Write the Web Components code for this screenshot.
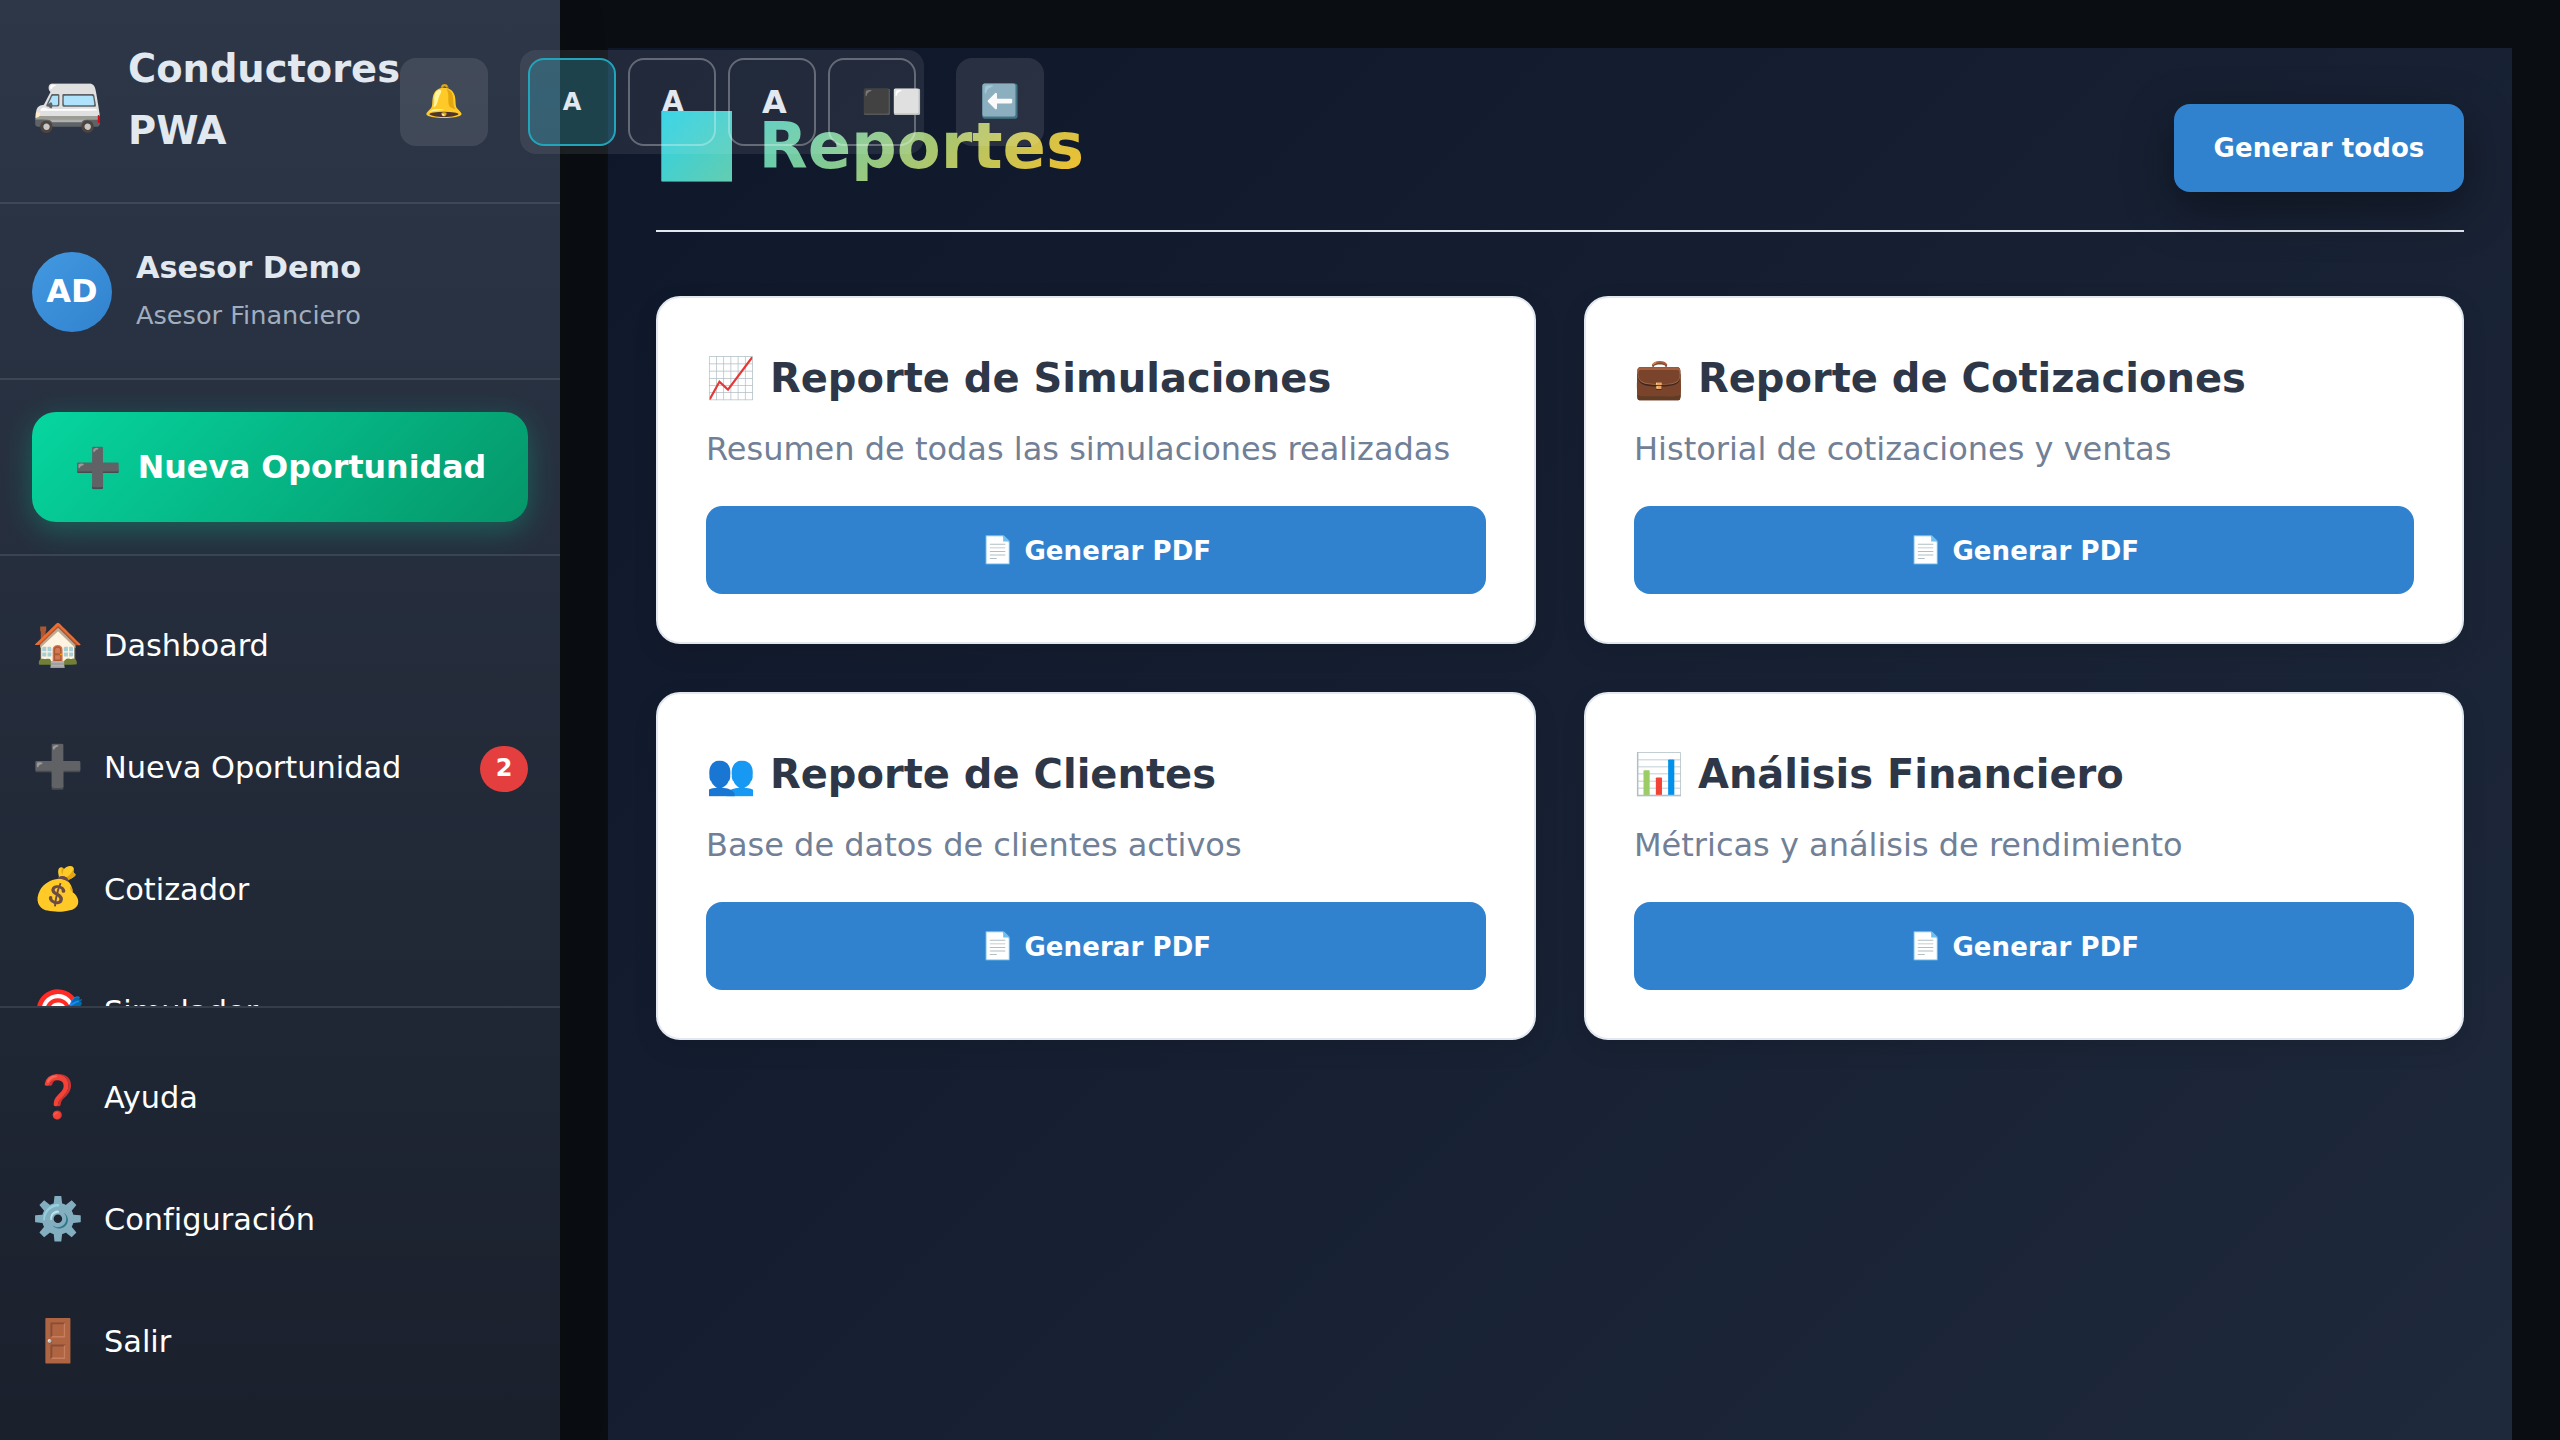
<!DOCTYPE html>
<html lang="es">
<head>
<meta charset="utf-8">
<title>Reportes</title>
<style>
html,body{margin:0;height:100%}
body{background:#0a0e12;font-family:"DejaVu Sans",sans-serif;font-size:32px;line-height:1.6;overflow:hidden}
</style>
</head>
<body>
<app-shell></app-shell>
<script>
const define = (name, css, html) => customElements.define(name, class extends HTMLElement {
  constructor() {
    super();
    const t = document.createElement('template');
    t.innerHTML = `<style>*{box-sizing:border-box}${css}</style>${html}`;
    this.attachShadow({ mode: 'open' }).append(t.content.cloneNode(true));
  }
});

define('icon-button', `
:host{display:flex;flex:none;width:88px;height:88px;box-sizing:border-box;padding-bottom:2px;border-radius:16px;align-items:center;justify-content:center;background:rgba(255,255,255,.1);font-size:32px;line-height:normal}
`, `<slot></slot>`);

define('size-button', `
:host{display:block;flex:none;width:88px;height:88px;box-sizing:border-box;border-radius:16px;border:2px solid rgba(255,255,255,.3);padding:0 32px;color:#e2e8f0;font-weight:700;line-height:84px;text-align:center;white-space:nowrap}
:host([active]){border-color:#22a5bb;background:rgba(34,211,238,.2)}
`, `<slot></slot>`);

define('text-tools', `
:host{display:flex;flex:none;gap:12px;padding:8px;border-radius:16px;background:rgba(255,255,255,.08)}
.a{font-size:24px}.b{font-size:28px}.c{font-size:32px}
`, `<size-button class="a" active>A</size-button><size-button class="b">A</size-button><size-button class="c">A</size-button><size-button class="a">⬛⬜</size-button>`);

define('brand-header', `
:host{display:flex;align-items:center;box-sizing:border-box;height:204px;padding:0 32px;border-bottom:2px solid rgba(255,255,255,.1)}
.van{font-size:57.6px;line-height:92px;margin-right:24px;padding-top:2px;flex:none}
.name{width:272px;flex:none;font-size:38.4px;font-weight:700;color:#e2e8f0;line-height:62px;padding-bottom:2px}
.tools{display:flex;gap:32px;flex:none;align-items:center;padding-top:2px}
`, `<span class="van">🚐</span><span class="name">Conductores PWA</span>
<div class="tools"><icon-button>🔔</icon-button><text-tools></text-tools><icon-button>⬅️</icon-button></div>`);

define('user-card', `
:host{display:flex;align-items:center;gap:24px;box-sizing:border-box;height:176px;padding:0 32px;border-bottom:2px solid rgba(255,255,255,.1)}
.avatar{width:80px;height:80px;border-radius:50%;background:linear-gradient(135deg,#4299e1,#3182ce);display:flex;align-items:center;justify-content:center;color:#fff;font-weight:700;font-size:32px;margin-top:1px}
.info{padding-bottom:2px}
.n{font-size:30.4px;font-weight:700;color:#e2e8f0;line-height:50px}
.r{font-size:25.6px;color:#a0aec0;line-height:44px}
`, `<div class="avatar">AD</div><div class="info"><div class="n"><slot name="name"></slot></div><div class="r"><slot name="role"></slot></div></div>`);

define('new-button', `
:host{display:block;padding:32px;border-bottom:2px solid rgba(255,255,255,.1)}
.btn{display:flex;align-items:center;justify-content:center;gap:16px;height:110px;border-radius:24px;background:linear-gradient(135deg,#06d6a0,#059669);box-shadow:0 8px 30px rgba(6,214,160,.3);color:#fff;font-weight:700;font-size:31.7px;line-height:normal;white-space:nowrap}
.i{font-size:38.4px}
`, `<div class="btn"><span class="i">➕</span><span><slot></slot></span></div>`);

define('nav-item', `
:host{display:flex;align-items:center;gap:24px;height:122px;padding:0 32px;flex:none;color:#fff;font-size:30.4px}
.i{width:48px;flex:none;font-size:41.6px;white-space:nowrap}
.t{flex:1;padding-top:2px}
::slotted([slot=badge]){background:#e53e3e;color:#fff;font-size:24px;line-height:38px;font-weight:700;padding:3px 15.6px 5px;border-radius:24px;margin-top:3px}
`, `<span class="i"><slot name="icon"></slot></span><span class="t"><slot></slot></span><slot name="badge"></slot>`);

define('side-bar', `
:host{display:flex;flex-direction:column;width:560px;height:1440px;flex:none;position:relative;z-index:2;background:linear-gradient(180deg,#2d3748,#1a202c);box-shadow:8px 0 40px rgba(0,0,0,.1)}
nav{flex:1;min-height:0;overflow:hidden;padding-top:28px;display:flex;flex-direction:column}
footer{height:434px;flex:none;box-sizing:border-box;border-top:2px solid rgba(255,255,255,.1);padding-top:28px}
`, `<brand-header></brand-header>
<user-card><span slot="name">Asesor Demo</span><span slot="role">Asesor Financiero</span></user-card>
<new-button>Nueva Oportunidad</new-button>
<nav>
<nav-item><span slot="icon">🏠</span>Dashboard</nav-item>
<nav-item><span slot="icon">➕</span>Nueva Oportunidad<span slot="badge">2</span></nav-item>
<nav-item><span slot="icon">💰</span>Cotizador</nav-item>
<nav-item><span slot="icon">🎯</span>Simulador</nav-item>
</nav>
<footer>
<nav-item><span slot="icon">❓</span>Ayuda</nav-item>
<nav-item><span slot="icon">⚙️</span>Configuración</nav-item>
<nav-item><span slot="icon">🚪</span>Salir</nav-item>
</footer>`);

define('primary-button', `
:host{display:flex;align-items:center;justify-content:center;box-sizing:border-box;height:88px;border-radius:16px;background:#3182ce;color:#fff;font-weight:700;font-size:26px;letter-spacing:.1px;line-height:normal;white-space:nowrap}
::slotted([slot=icon]){margin-right:10.5px;font-size:26.667px}
.pdf{padding-top:1px}
`, `<slot name="icon"></slot><span class="pdf"><slot></slot></span>`);

define('page-header', `
:host{display:flex;align-items:center;justify-content:space-between;padding-bottom:32px;border-bottom:2px solid #e2e8f0;margin-bottom:64px}
h1{margin:0;padding:0 0 2px .5px;font-size:64px;letter-spacing:-.1px;font-weight:700;line-height:100.4px;background:linear-gradient(135deg,#22d3ee,#fbbf24);-webkit-background-clip:text;background-clip:text;color:transparent}
primary-button{width:290px;margin-top:1.6px;padding-bottom:2px;box-shadow:0 16px 50px rgba(0,0,0,.4)}
`, `<h1><slot></slot></h1><primary-button>Generar todos</primary-button>`);

define('report-card', `
:host{display:block;box-sizing:border-box;padding:48px;border:2px solid #e2e8f0;border-radius:24px;background:#fff;box-shadow:0 8px 24px rgba(0,0,0,.1)}
h3{margin:0 0 13px;font-size:40px;line-height:64px;color:#2d3748}
p{margin:0 0 31px;font-size:32px;line-height:52px;color:#718096}
`, `<h3><slot name="title"></slot></h3><p><slot></slot></p><primary-button><span slot="icon">📄</span>Generar PDF</primary-button>`);

define('reports-page', `
:host{display:block;box-sizing:border-box;flex:1;margin:48px 48px 0;padding:48px;background:linear-gradient(135deg,#0f172a,#1e293b)}
.grid{display:grid;grid-template-columns:1fr 1fr;gap:48px}
`, `<page-header>📊 Reportes</page-header>
<div class="grid">
<report-card><span slot="title">📈 Reporte de Simulaciones</span>Resumen de todas las simulaciones realizadas</report-card>
<report-card><span slot="title">💼 Reporte de Cotizaciones</span>Historial de cotizaciones y ventas</report-card>
<report-card><span slot="title">👥 Reporte de Clientes</span>Base de datos de clientes activos</report-card>
<report-card><span slot="title">📊 Análisis Financiero</span>Métricas y análisis de rendimiento</report-card>
</div>`);

define('app-shell', `
:host{display:flex;width:2560px;height:1440px;overflow:hidden}
`, `<side-bar></side-bar><reports-page></reports-page>`);
</script>
</body>
</html>
